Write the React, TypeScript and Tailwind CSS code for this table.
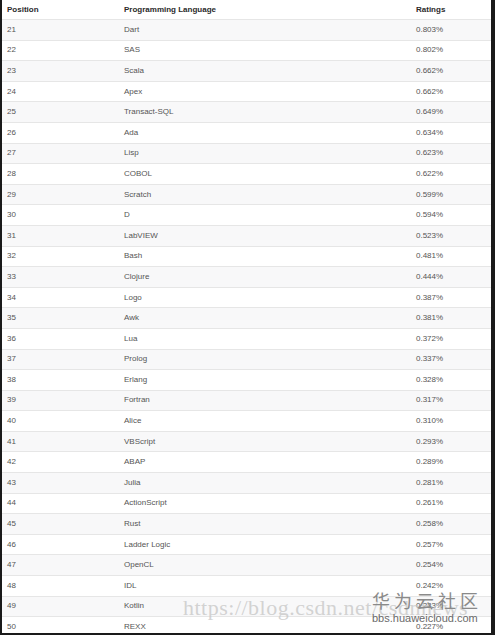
import React from 'react';

const rows: [number, string, string][] = [
  [21, 'Dart', '0.803%'],
  [22, 'SAS', '0.802%'],
  [23, 'Scala', '0.662%'],
  [24, 'Apex', '0.662%'],
  [25, 'Transact-SQL', '0.649%'],
  [26, 'Ada', '0.634%'],
  [27, 'Lisp', '0.623%'],
  [28, 'COBOL', '0.622%'],
  [29, 'Scratch', '0.599%'],
  [30, 'D', '0.594%'],
  [31, 'LabVIEW', '0.523%'],
  [32, 'Bash', '0.481%'],
  [33, 'Clojure', '0.444%'],
  [34, 'Logo', '0.387%'],
  [35, 'Awk', '0.381%'],
  [36, 'Lua', '0.372%'],
  [37, 'Prolog', '0.337%'],
  [38, 'Erlang', '0.328%'],
  [39, 'Fortran', '0.317%'],
  [40, 'Alice', '0.310%'],
  [41, 'VBScript', '0.293%'],
  [42, 'ABAP', '0.289%'],
  [43, 'Julia', '0.281%'],
  [44, 'ActionScript', '0.261%'],
  [45, 'Rust', '0.258%'],
  [46, 'Ladder Logic', '0.257%'],
  [47, 'OpenCL', '0.254%'],
  [48, 'IDL', '0.242%'],
  [49, 'Kotlin', '0.233%'],
  [50, 'REXX', '0.227%'],
];

export default function App() {
  return (
    <div className="w-[495px] h-[635px] overflow-hidden bg-[#1a1a1a] pl-[2px] pr-[4px] pb-[2px] relative font-['Liberation_Sans',Arial,sans-serif]">
      <div className="bg-white h-full overflow-hidden">
        {/* Header */}
        <div className="grid grid-cols-[117px_292px_1fr] h-[19px] items-center text-[8px] font-bold text-[#2a2a2a] pl-[5px]">
          <span>Position</span>
          <span>Programming Language</span>
          <span>Ratings</span>
        </div>

        {/* Rows */}
        {rows.map(([pos, lang, rating], i) => (
          <div
            key={pos}
            className={`grid grid-cols-[117px_292px_1fr] h-[20.6px] items-center text-[8px] text-[#555] pl-[5px] border-t border-[#e6e6e6] ${
              i % 2 === 0 ? 'bg-[#f8f8f9]' : 'bg-white'
            }`}
          >
            <span>{pos}</span>
            <span>{lang}</span>
            <span>{rating}</span>
          </div>
        ))}
      </div>

      {/* Watermarks */}
      <div className="absolute left-[183px] top-[597px] text-[22px] leading-none text-[#c8c8c8]/80 font-['Liberation_Serif',serif] whitespace-nowrap tracking-[0.5px]">
        https://blog.csdn.net/csdnnews
      </div>
      <div className="absolute left-[372px] top-[591px] text-[18px] leading-none text-[#8a8a8a] tracking-[4px] font-['Noto_Sans_CJK_SC',sans-serif] whitespace-nowrap">
        华为云社区
      </div>
      <div className="absolute left-[372px] top-[613px] text-[11px] leading-none text-[#6a6a6a] whitespace-nowrap">
        bbs.huaweicloud.com
      </div>
    </div>
  );
}
